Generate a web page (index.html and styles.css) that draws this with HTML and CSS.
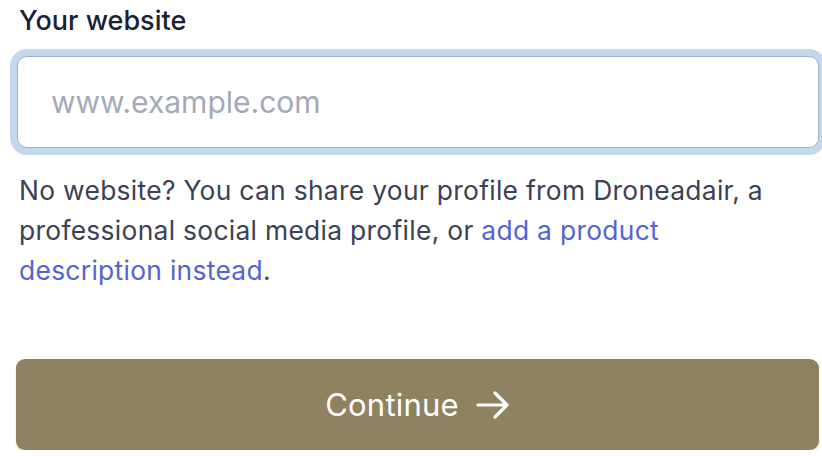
FILE: index.html
```html
<!DOCTYPE html>
<html>
<head>
<meta charset="utf-8">
<link rel="stylesheet" href="styles.css">
</head>
<body>
<div class="form">
  <label class="label" for="site">Your website</label>
  <div class="field">
    <input id="site" class="input" type="text" placeholder="www.example.com">
  </div>
  <p class="help">No website? You can share your profile from Droneadair, a professional social media profile, or <a href="#" class="link">add a product description instead</a>.</p>
  <button class="btn" type="button">
    <span>Continue</span>
    <svg class="arrow" width="34" height="30" viewBox="0 0 34 30" fill="none" stroke="#fff" stroke-width="3.2" stroke-linecap="round" stroke-linejoin="round"><path d="M2 15h29M19 3l12 12-12 12"/></svg>
  </button>
</div>
</body>
</html>
```
FILE: styles.css
```css
* { box-sizing: border-box; }
html, body { margin: 0; padding: 0; background: #fff; }
body { font-family: Inter, "Noto Sans", sans-serif; }
.form {
  display: flex;
  flex-direction: column;
  padding: 5px 3px 0 17px;
}
.label {
  font-size: 27px;
  font-weight: 500;
  line-height: 32px;
  color: #1b2036;
  padding-left: 2px;
}
.field { margin-top: 19px; }
.input {
  width: 100%;
  height: 92px;
  border: 1px solid #9eb3cb;
  border-radius: 10px;
  box-shadow: 0 0 0 7px #c3d8ee;
  padding: 0 0 0 33px;
  font-family: Inter, "Noto Sans", sans-serif;
  font-size: 30px;
  color: #1b2036;
  outline: none;
  background: #fff;
}
.input::placeholder { color: #a3a9b8; }
.help {
  margin: 22px 0 0 0;
  font-size: 26.4px;
  line-height: 40px;
  letter-spacing: 0.3px;
  color: #3b4152;
  padding: 0 40px 0 2px;
}
.link { color: #5463d1; text-decoration: none; }
.btn {
  margin-top: 69px;
  height: 91px;
  margin-left: -1px;
  border: none;
  border-radius: 9px;
  background: #8f8260;
  color: #fff;
  font-family: Inter, "Noto Sans", sans-serif;
  font-size: 31px;
  letter-spacing: 0.2px;
  display: flex;
  align-items: center;
  justify-content: center;
  gap: 17px;
  padding-left: 6px;
  box-shadow: 0 2px 2px rgba(0,0,0,0.12);
}
.arrow { display: block; }
```
